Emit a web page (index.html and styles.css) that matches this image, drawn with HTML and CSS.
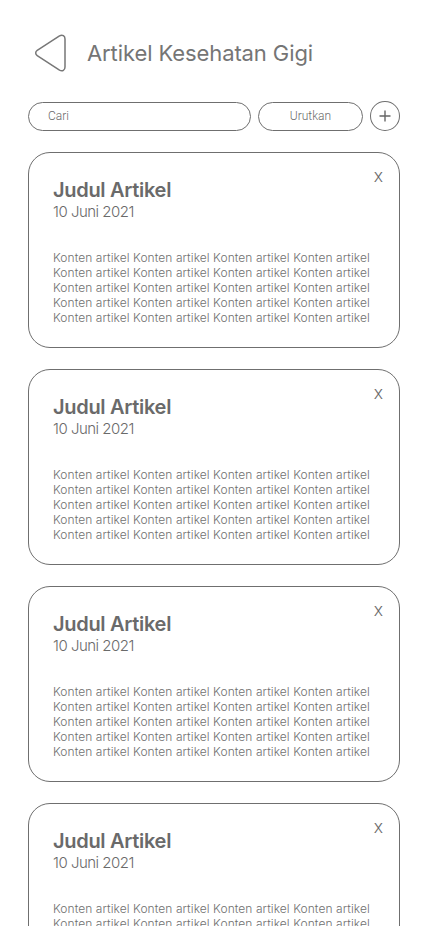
FILE: index.html
```html
<!DOCTYPE html>
<html lang="id">
<head>
<meta charset="utf-8">
<title>Artikel Kesehatan Gigi</title>
<link rel="stylesheet" href="styles.css">
</head>
<body>
<div class="page">
  <header class="header">
    <button class="back" aria-label="Kembali">
      <svg width="34" height="40" viewBox="0 0 34 40" fill="none">
        <path d="M26.5 2.8 C29.5 1.2 32 2.8 32 6 L32 34 C32 37.2 29.5 38.8 26.5 37.2 L4.2 22.6 C2.2 21.3 2.2 18.7 4.2 17.4 Z" stroke="#777" stroke-width="1.5" stroke-linejoin="round"/>
      </svg>
    </button>
    <h1 class="title">Artikel Kesehatan Gigi</h1>
  </header>

  <div class="toolbar">
    <div class="search">Cari</div>
    <button class="sort">Urutkan</button>
    <button class="add" aria-label="Tambah">
      <svg width="12" height="12" viewBox="0 0 12 12"><path d="M6 0.5V11.5M0.5 6H11.5" stroke="#666" stroke-width="1.4"/></svg>
    </button>
  </div>

  <main class="list">
    <article class="card">
      <div class="card-head">
        <div>
          <h2 class="card-title">Judul Artikel</h2>
          <div class="card-date">10 Juni 2021</div>
        </div>
        <span class="close">x</span>
      </div>
      <p class="card-body">Konten artikel Konten artikel Konten artikel Konten artikel<br>Konten artikel Konten artikel Konten artikel Konten artikel<br>Konten artikel Konten artikel Konten artikel Konten artikel<br>Konten artikel Konten artikel Konten artikel Konten artikel<br>Konten artikel Konten artikel Konten artikel Konten artikel</p>
    </article>
    <article class="card">
      <div class="card-head">
        <div>
          <h2 class="card-title">Judul Artikel</h2>
          <div class="card-date">10 Juni 2021</div>
        </div>
        <span class="close">x</span>
      </div>
      <p class="card-body">Konten artikel Konten artikel Konten artikel Konten artikel<br>Konten artikel Konten artikel Konten artikel Konten artikel<br>Konten artikel Konten artikel Konten artikel Konten artikel<br>Konten artikel Konten artikel Konten artikel Konten artikel<br>Konten artikel Konten artikel Konten artikel Konten artikel</p>
    </article>
    <article class="card">
      <div class="card-head">
        <div>
          <h2 class="card-title">Judul Artikel</h2>
          <div class="card-date">10 Juni 2021</div>
        </div>
        <span class="close">x</span>
      </div>
      <p class="card-body">Konten artikel Konten artikel Konten artikel Konten artikel<br>Konten artikel Konten artikel Konten artikel Konten artikel<br>Konten artikel Konten artikel Konten artikel Konten artikel<br>Konten artikel Konten artikel Konten artikel Konten artikel<br>Konten artikel Konten artikel Konten artikel Konten artikel</p>
    </article>
    <article class="card">
      <div class="card-head">
        <div>
          <h2 class="card-title">Judul Artikel</h2>
          <div class="card-date">10 Juni 2021</div>
        </div>
        <span class="close">x</span>
      </div>
      <p class="card-body">Konten artikel Konten artikel Konten artikel Konten artikel<br>Konten artikel Konten artikel Konten artikel Konten artikel<br>Konten artikel Konten artikel Konten artikel Konten artikel<br>Konten artikel Konten artikel Konten artikel Konten artikel<br>Konten artikel Konten artikel Konten artikel Konten artikel</p>
    </article>
  </main>
</div>
</body>
</html>
```

FILE: styles.css
```css
* { box-sizing: border-box; }
html, body { margin: 0; padding: 0; background: #fff; }
body {
  font-family: "Inter", "Noto Sans", sans-serif;
  color: #6f6f6f;
  overflow: hidden;
  height: 926px;
}
.page {
  padding: 33px 28px 0 28px;
  height: 926px;
  overflow: hidden;
}
.header {
  display: flex;
  align-items: center;
  gap: 20px;
  height: 40px;
  margin-left: 5px;
}
.back {
  border: 0;
  background: none;
  padding: 0;
  width: 34px;
  height: 40px;
  display: block;
}
.title {
  margin: 0;
  font-size: 22px;
  font-weight: 400;
  color: #757575;
  letter-spacing: -0.1px;
}
.toolbar {
  display: flex;
  align-items: center;
  gap: 7px;
  margin-top: 28px;
}
.search {
  width: 224px;
  height: 29px;
  border: 1px solid #6f6f6f;
  border-radius: 15px;
  padding-left: 19px;
  font-family: "Roboto", sans-serif;
  font-weight: 300;
  font-size: 12px;
  line-height: 27px;
  color: #6a6a6a;
}
.sort {
  width: 106px;
  height: 29px;
  border: 1px solid #6f6f6f;
  border-radius: 15px;
  background: #fff;
  font-family: "Roboto", sans-serif;
  font-weight: 300;
  font-size: 12px;
  color: #6a6a6a;
  padding: 0;
}
.add {
  width: 30px;
  height: 30px;
  border: 1px solid #6f6f6f;
  border-radius: 50%;
  background: #fff;
  padding: 0;
  display: flex;
  align-items: center;
  justify-content: center;
}
.list {
  display: flex;
  flex-direction: column;
  gap: 21px;
  margin-top: 21px;
}
.card {
  border: 1px solid #6f6f6f;
  border-radius: 22px;
  padding: 24px 16px 24px 24px;
  height: 196px;
  flex-shrink: 0;
}
.card-head {
  display: flex;
  justify-content: space-between;
  align-items: flex-start;
}
.card-title {
  margin: 0;
  font-size: 20px;
  font-weight: 600;
  line-height: 26px;
  color: #6a6a6a;
  letter-spacing: -0.3px;
}
.card-date {
  font-size: 15px;
  line-height: 18px;
  font-weight: 300;
  color: #6a6a6a;
  letter-spacing: -0.5px;
}
.close {
  font-family: "Roboto", sans-serif;
  font-size: 19px;
  font-weight: 300;
  line-height: 1;
  margin-top: -11px;
  color: #6a6a6a;
}
.card-body {
  margin: 29px 0 0 0;
  font-size: 12px;
  font-weight: 300;
  line-height: 15px;
  color: #707070;
  letter-spacing: 0.07px;
  white-space: nowrap;
}
```
